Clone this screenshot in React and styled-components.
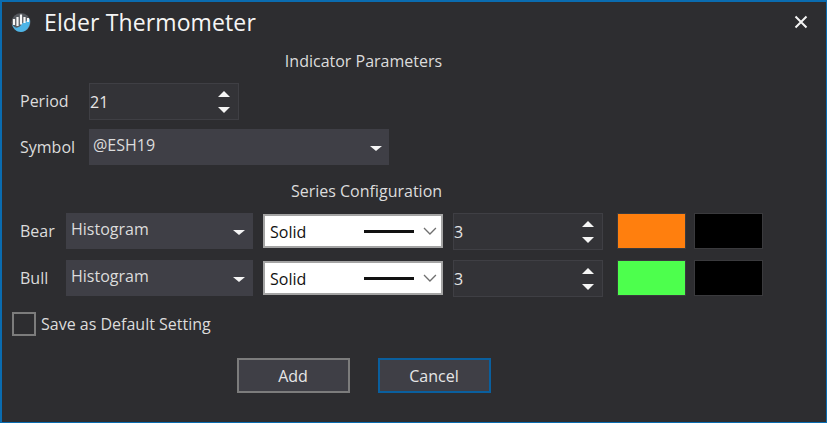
import React from "react";
import styled, { createGlobalStyle } from "styled-components";

const GlobalStyle = createGlobalStyle`
  html, body {
    margin: 0;
    padding: 0;
    background-color: #2d2d30;
  }
`;

function Logo() {
  return (
    <svg width="22" height="21" viewBox="0 0 21 21">
      <circle cx="10.5" cy="10.5" r="9.5" fill="#54585e" />
      <path d="M1.5 12 C5 18 9 16 12 11 L19.5 7 C20.5 14 16 20 10.5 20 C6 20 2.5 16.5 1.5 12 Z" fill="#4db4e6" />
      <path d="M3.5 7v6M7 5v9M10.5 2.5v10M14 5v6M17.5 6v4" stroke="#f6f6f6" strokeWidth="2.2" fill="none" />
    </svg>
  );
}

function Spinner() {
  return (
    <SpinBox>
      <ArrowUp />
      <ArrowDown />
    </SpinBox>
  );
}

function SeriesRow({ name, color }) {
  return (
    <Row>
      <SeriesLabel>{name}</SeriesLabel>
      <TypeSelect>
        <SelectText>Histogram</SelectText>
        <Caret />
      </TypeSelect>
      <LineSelect>
        <LineText>Solid</LineText>
        <LineSample />
        <svg width="14" height="8" viewBox="0 0 14 8">
          <path d="M1 1 L7 7 L13 1" stroke="#707070" strokeWidth="1.3" fill="none" />
        </svg>
      </LineSelect>
      <NumberInput $width={150}>
        <InputText>3</InputText>
        <Spinner />
      </NumberInput>
      <Swatch $color={color} $first />
      <Swatch $color="#000000" />
    </Row>
  );
}

export default function App() {
  return (
    <Dialog>
      <GlobalStyle />
      <TitleBar>
        <Logo />
        <Title>Elder Thermometer</Title>
        <CloseIcon width="14" height="14" viewBox="0 0 14 14">
          <path d="M1.5 1.5 L12.5 12.5 M12.5 1.5 L1.5 12.5" stroke="#f4f4f4" strokeWidth="2" />
        </CloseIcon>
      </TitleBar>

      <Body>
        <Heading $top={9}>Indicator Parameters</Heading>

        <ParamRow $top={12}>
          <ParamLabel $lift={2}>Period</ParamLabel>
          <NumberInput $width={150}>
            <InputText>21</InputText>
            <Spinner />
          </NumberInput>
        </ParamRow>

        <ParamRow $top={9}>
          <ParamLabel>Symbol</ParamLabel>
          <SymbolSelect>
            <SelectText>@ESH19</SelectText>
            <Caret />
          </SymbolSelect>
        </ParamRow>

        <Heading $top={16} $shift={6}>Series Configuration</Heading>

        <SeriesList>
          <SeriesRow name="Bear" color="#ff7f0e" />
          <SeriesRow name="Bull" color="#4dff4d" />
        </SeriesList>

        <CheckRow>
          <CheckBox />
          <CheckText>Save as Default Setting</CheckText>
        </CheckRow>

        <Buttons>
          <Button>Add</Button>
          <Button $focused>Cancel</Button>
        </Buttons>
      </Body>
    </Dialog>
  );
}

const Dialog = styled.div`
  width: 827px;
  height: 423px;
  box-sizing: border-box;
  display: flex;
  flex-direction: column;
  background-color: #2d2d30;
  border-style: solid;
  border-color: #0a6cb0;
  border-width: 2px 1px 1px 2px;
  color: #e6e6e6;
  font-family: "Open Sans", "Noto Sans", sans-serif;
  font-size: 16px;
  overflow: hidden;
`;

const TitleBar = styled.div`
  height: 40px;
  display: flex;
  align-items: center;
  padding: 0 18px 0 8px;
`;

const Title = styled.div`
  flex: 1;
  margin-left: 12px;
  font-size: 23px;
  font-weight: 500;
  letter-spacing: 0.12px;
  color: #f5f5f5;
`;

const CloseIcon = styled.svg`
  flex: none;
`;

const Body = styled.div`
  width: 723px;
  display: flex;
  flex-direction: column;
`;

const Heading = styled.div`
  height: 20px;
  line-height: 20px;
  margin-top: ${(p) => p.$top}px;
  padding-left: ${(p) => p.$shift || 0}px;
  text-align: center;
  color: #dcdcdc;
`;

const ParamRow = styled.div`
  display: flex;
  align-items: center;
  margin-top: ${(p) => p.$top}px;
  padding-left: 18px;
`;

const ParamLabel = styled.div`
  width: 69px;
  flex: none;
  margin-bottom: ${(p) => p.$lift || 0}px;
  color: #dcdcdc;
`;

const NumberInput = styled.div`
  width: ${(p) => p.$width}px;
  height: 37px;
  flex: none;
  box-sizing: border-box;
  display: flex;
  align-items: center;
  justify-content: space-between;
  padding: 1px 6px 0 0;
  background-color: #333337;
  border: 1px solid #3f3f44;
`;

const InputText = styled.span`
  color: #e6e6e6;
`;

const SpinBox = styled.div`
  display: flex;
  flex-direction: column;
  gap: 10px;
  margin: -1px 2px 0 0;
`;

const ArrowUp = styled.div`
  width: 0;
  height: 0;
  border-left: 6px solid transparent;
  border-right: 6px solid transparent;
  border-bottom: 6px solid #f5f5f5;
`;

const ArrowDown = styled.div`
  width: 0;
  height: 0;
  border-left: 6px solid transparent;
  border-right: 6px solid transparent;
  border-top: 6px solid #f5f5f5;
`;

const Caret = styled.div`
  width: 0;
  height: 0;
  flex: none;
  margin-top: 2px;
  border-left: 6px solid transparent;
  border-right: 6px solid transparent;
  border-top: 5px solid #f5f5f5;
`;

const SymbolSelect = styled.div`
  width: 300px;
  height: 36px;
  box-sizing: border-box;
  display: flex;
  align-items: center;
  justify-content: space-between;
  padding: 0 7px 0 4px;
  background-color: #3f3f46;
`;

const SelectText = styled.span`
  margin-top: -4px;
  color: #dcdcdc;
`;

const SeriesList = styled.div`
  display: flex;
  flex-direction: column;
  gap: 10px;
  margin-top: 12px;
`;

const Row = styled.div`
  display: flex;
  align-items: flex-start;
  padding-left: 18px;
`;

const SeriesLabel = styled.div`
  width: 46px;
  flex: none;
  margin-top: 7px;
  color: #dcdcdc;
`;

const TypeSelect = styled.div`
  width: 187px;
  height: 36px;
  flex: none;
  box-sizing: border-box;
  display: flex;
  align-items: center;
  justify-content: space-between;
  padding: 0 8px 0 5px;
  background-color: #3f3f46;
`;

const LineSelect = styled.div`
  width: 180px;
  height: 34px;
  flex: none;
  margin: 1px 10px 0;
  box-sizing: border-box;
  display: flex;
  align-items: center;
  padding: 0 4px 0 5px;
  background-color: #ffffff;
  border: 2px solid #a4a4a4;
  color: #111111;
`;

const LineText = styled.span`
  width: 95px;
  margin-top: 2px;
`;

const LineSample = styled.div`
  width: 50px;
  height: 3px;
  margin-right: 9px;
  background-color: #111111;
`;

const Swatch = styled.div`
  width: 69px;
  height: 36px;
  flex: none;
  box-sizing: border-box;
  margin-left: ${(p) => (p.$first ? 14 : 8)}px;
  background-color: ${(p) => p.$color};
  border: 1px solid #3a3a3d;
`;

const CheckRow = styled.div`
  display: flex;
  align-items: center;
  margin-top: 15px;
  padding-left: 10px;
`;

const CheckBox = styled.div`
  width: 24px;
  height: 24px;
  flex: none;
  box-sizing: border-box;
  border: 2px solid #7c7c7c;
`;

const CheckText = styled.span`
  margin-left: 5px;
  color: #dcdcdc;
`;

const Buttons = styled.div`
  display: flex;
  justify-content: center;
  gap: 28px;
  margin-top: 22px;
`;

const Button = styled.div`
  width: 113px;
  height: 35px;
  box-sizing: border-box;
  display: flex;
  align-items: center;
  justify-content: center;
  background-color: #3f3f46;
  border: 2px solid ${(p) => (p.$focused ? "#0a5f9e" : "#7c7c7c")};
  color: #e6e6e6;
`;
